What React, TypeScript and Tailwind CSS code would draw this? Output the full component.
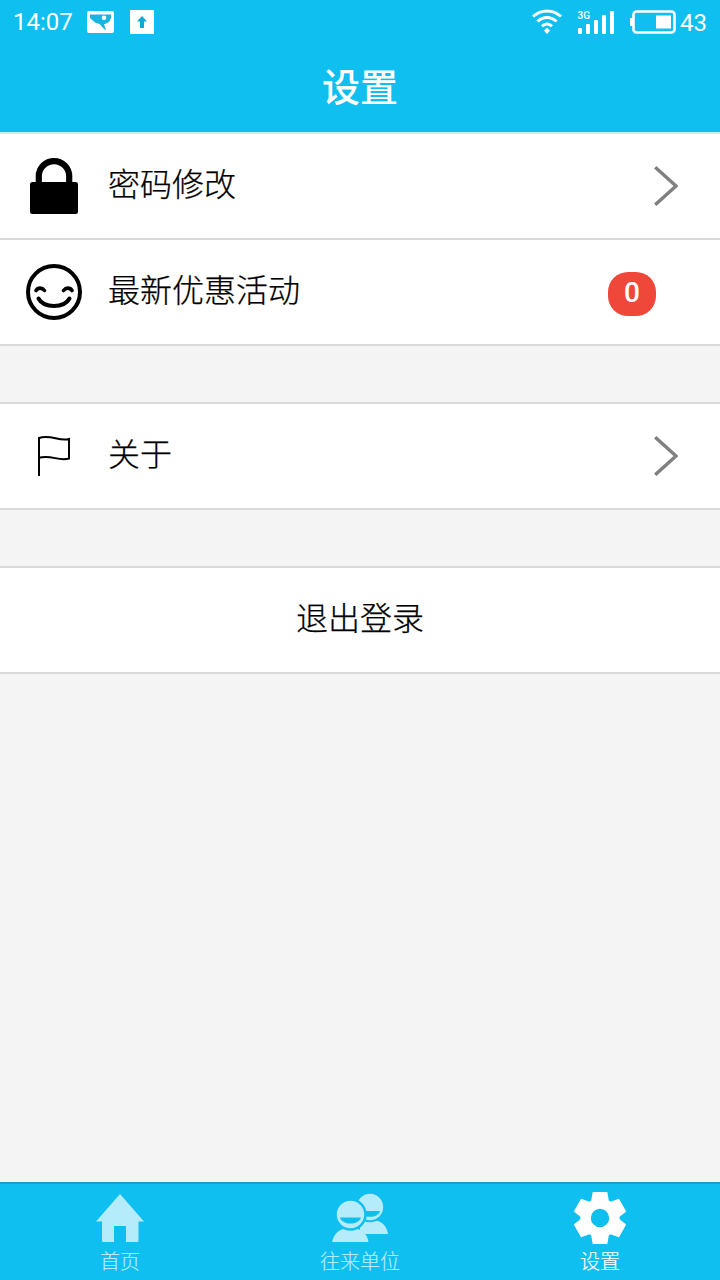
import type { ReactNode } from "react";

function StatusBar() {
  return (
    <div className="flex h-11 items-center justify-between pl-[13px] pr-[13px] font-['Roboto',sans-serif] text-[24px] leading-none">
      <div className="flex items-center">
        <span className="w-[74px]">14:07</span>
        <svg width="27" height="22" viewBox="0 0 27 22" aria-hidden="true">
          <rect width="27" height="22" rx="2" fill="#fff" />
          <path d="M3 3.500H24V7L22 11L17 13.500L19 19L17.500 18.500L12.500 13L8 11.500L3 7Z" fill="#18b4e2" />
          <circle cx="17" cy="6.8" r="2.300" fill="#fff" />
        </svg>
        <svg className="ml-4" width="24" height="24" viewBox="0 0 24 24" aria-hidden="true">
          <rect width="24" height="24" rx="1" fill="#fff" />
          <path d="M12 6L17 11.5H14V18H10V11.5H7Z" fill="#0fa9d8" />
        </svg>
      </div>
      <div className="flex items-center">
        <svg width="30" height="26" viewBox="0 0 30 26" fill="none" stroke="#fff" strokeWidth="3" aria-hidden="true">
          <path d="M1 7.5C9 0 21 0 29 7.5M5.5 12.5C11 7 19 7 24.5 12.5M10 17.300C13 14.300 17 14.300 20 17.300" />
          <path d="M15 18.800L18 21.500L15 25L12 21.500Z" fill="#fff" stroke="none" />
        </svg>
        <svg className="ml-[15px]" width="38" height="26" viewBox="0 0 38 26" fill="#fff" aria-hidden="true">
          <text x="0.500" y="9.500" fontSize="10" fontWeight="500" fontFamily="Roboto">3G</text>
          <rect x="1" y="19" width="4" height="6" rx="1" />
          <rect x="9" y="15" width="4" height="10" rx="1" />
          <rect x="17" y="11" width="4" height="14" rx="1" />
          <rect x="25" y="6" width="4" height="19" rx="1" />
          <rect x="33" y="2" width="4" height="23" rx="1" />
        </svg>
        <svg className="ml-[15px]" width="46" height="24" viewBox="0 0 46 24" aria-hidden="true">
          <rect x="3.5" y="1.5" width="41" height="21" rx="3" fill="none" stroke="#fff" strokeWidth="2.6" />
          <rect x="0" y="8" width="3" height="8" rx="1" fill="#fff" />
          <rect x="26" y="5.500" width="15" height="13" fill="#fff" />
        </svg>
        <span className="ml-1 pt-px">43</span>
      </div>
    </div>
  );
}

function LockIcon() {
  return (
    <svg width="56" height="56" viewBox="0 0 56 56" aria-hidden="true">
      <rect x="4" y="24" width="48" height="32" rx="2.5" />
      <path d="M12.8 26V18.300a15.2 15.200 0 0 1 30.4 0V26" fill="none" stroke="#000" strokeWidth="6.2" />
    </svg>
  );
}

function SmileIcon() {
  return (
    <svg width="56" height="56" viewBox="0 0 56 56" fill="none" stroke="#000" strokeWidth="4" strokeLinecap="round" aria-hidden="true">
      <circle cx="28" cy="28" r="26" />
      <path d="M10 26.500C12 23.300 16 23.300 18.500 26.500M37.500 26.500C40 23.300 44 23.300 46 26.500" strokeWidth="3.6" />
      <path d="M12.500 34.500C18 44.500 38 44.500 43.500 34.500" />
    </svg>
  );
}

function FlagIcon() {
  return (
    <svg width="56" height="56" viewBox="0 0 56 56" fill="none" stroke="#000" strokeWidth="2" aria-hidden="true">
      <path d="M13 48V10C25 6 33 14 43 11V30.500C33 34 25 26 13 29.800" />
    </svg>
  );
}

function Chevron() {
  return (
    <svg className="mr-[42px]" width="24" height="40" viewBox="0 0 24 40" fill="none" stroke="#808080" strokeWidth="3.400" aria-hidden="true">
      <path d="M1.200 1.200L22 20L1.200 38.800" />
    </svg>
  );
}

function Row({ icon, label, children }: { icon: ReactNode; label: string; children: ReactNode }) {
  return (
    <div className="flex h-[106px] items-center border-b-2 border-[#d9d9d9] bg-white pl-[26px]">
      {icon}
      <span className="ml-[26px] flex-1 pb-2">{label}</span>
      {children}
    </div>
  );
}

function HomeIcon() {
  return (
    <svg width="56" height="52" viewBox="0 0 56 52" fill="currentColor" aria-hidden="true">
      <path d="M28 2L52 29.500H46.500V48.500Q46.500 50 45 50H34V34H22V50H11.500Q10 50 10 48.500V29.500H4Z" />
    </svg>
  );
}

function PeopleIcon() {
  return (
    <svg width="56" height="52" viewBox="0 0 56 52" fill="currentColor" aria-hidden="true">
      <path d="M28 42V29H46C52 31 55 36 56 42Z" />
      <circle cx="38" cy="15" r="15.200" fill="#0fbff0" />
      <circle cx="38" cy="15" r="13.200" />
      <path d="M30 19H48C46.500 25.500 36 26 30 23Z" fill="#0fbff0" />
      <path d="M-2 52C0 40 8 35.500 18 35.500S36 42 39 52Z" fill="#0fbff0" />
      <path d="M0 50C2 42 6 38 12 37H25C31 38 35 42 36.500 50Z" />
      <circle cx="18.500" cy="22.500" r="16.200" fill="#0fbff0" />
      <circle cx="18.500" cy="22.500" r="13.700" />
      <path d="M8 25.500H29C26.500 33.500 10.500 33.500 8 25.500Z" fill="#0fbff0" />
    </svg>
  );
}

function GearIcon() {
  return (
    <svg width="56" height="52" viewBox="-28 -26 56 52" fill="currentColor" aria-hidden="true">
      <circle r="14.400" fill="none" stroke="currentColor" strokeWidth="10.400" />
      {[0, 60, 120, 180, 240, 300].map((angle) => (
        <path key={angle} d="M-9 -16L-7.500 -25.200Q-7.300 -26 -6.500 -26H6.500Q7.300 -26 7.500 -25.200L9 -16Z" transform={`rotate(${angle})`} />
      ))}
    </svg>
  );
}

const tabs = [
  { label: "首页", icon: <HomeIcon />, active: false },
  { label: "往来单位", icon: <PeopleIcon />, active: false },
  { label: "设置", icon: <GearIcon />, active: true },
];

export default function App() {
  return (
    <main className="flex h-[1280px] w-[720px] flex-col overflow-hidden bg-[#f4f4f4] font-['Noto_Sans_CJK_SC',sans-serif] text-black">
      <header className="h-[134px] border-b-2 border-[#d3e7ef] bg-[#0fbff0] text-white">
        <StatusBar />
        <h1 className="text-center text-[38px] font-medium leading-[82px]">设置</h1>
      </header>

      <div className="flex-1 text-[32px] font-light leading-[48px] [-webkit-text-stroke:0.25px_currentColor]">
        <section>
          <Row icon={<LockIcon />} label="密码修改">
            <Chevron />
          </Row>
          <Row icon={<SmileIcon />} label="最新优惠活动">
            <span className="mr-16 mt-1 h-11 w-12 rounded-[20px] bg-[#ef473a] text-center font-['Roboto',sans-serif] text-[28px] font-medium leading-[41px] text-white [-webkit-text-stroke:0]">
              0
            </span>
          </Row>
        </section>
        <section className="mt-14 border-t-2 border-[#d9d9d9]">
          <Row icon={<FlagIcon />} label="关于">
            <Chevron />
          </Row>
        </section>
        <button className="mt-14 block h-[108px] w-full border-y-2 border-[#d9d9d9] bg-white pb-2 text-center">
          退出登录
        </button>
      </div>

      <nav className="grid h-[98px] grid-cols-3 border-t-2 border-[#1c9fc5] bg-[#0fbff0] pt-2 text-white">
        {tabs.map((tab) => (
          <a key={tab.label} className={tab.active ? "flex flex-col items-center" : "flex flex-col items-center text-[#b5ecfb]"}>
            {tab.icon}
            <span className="mt-[3px] text-[20px] font-light leading-[28px] [-webkit-text-stroke:0.2px_currentColor]">{tab.label}</span>
          </a>
        ))}
      </nav>
    </main>
  );
}
